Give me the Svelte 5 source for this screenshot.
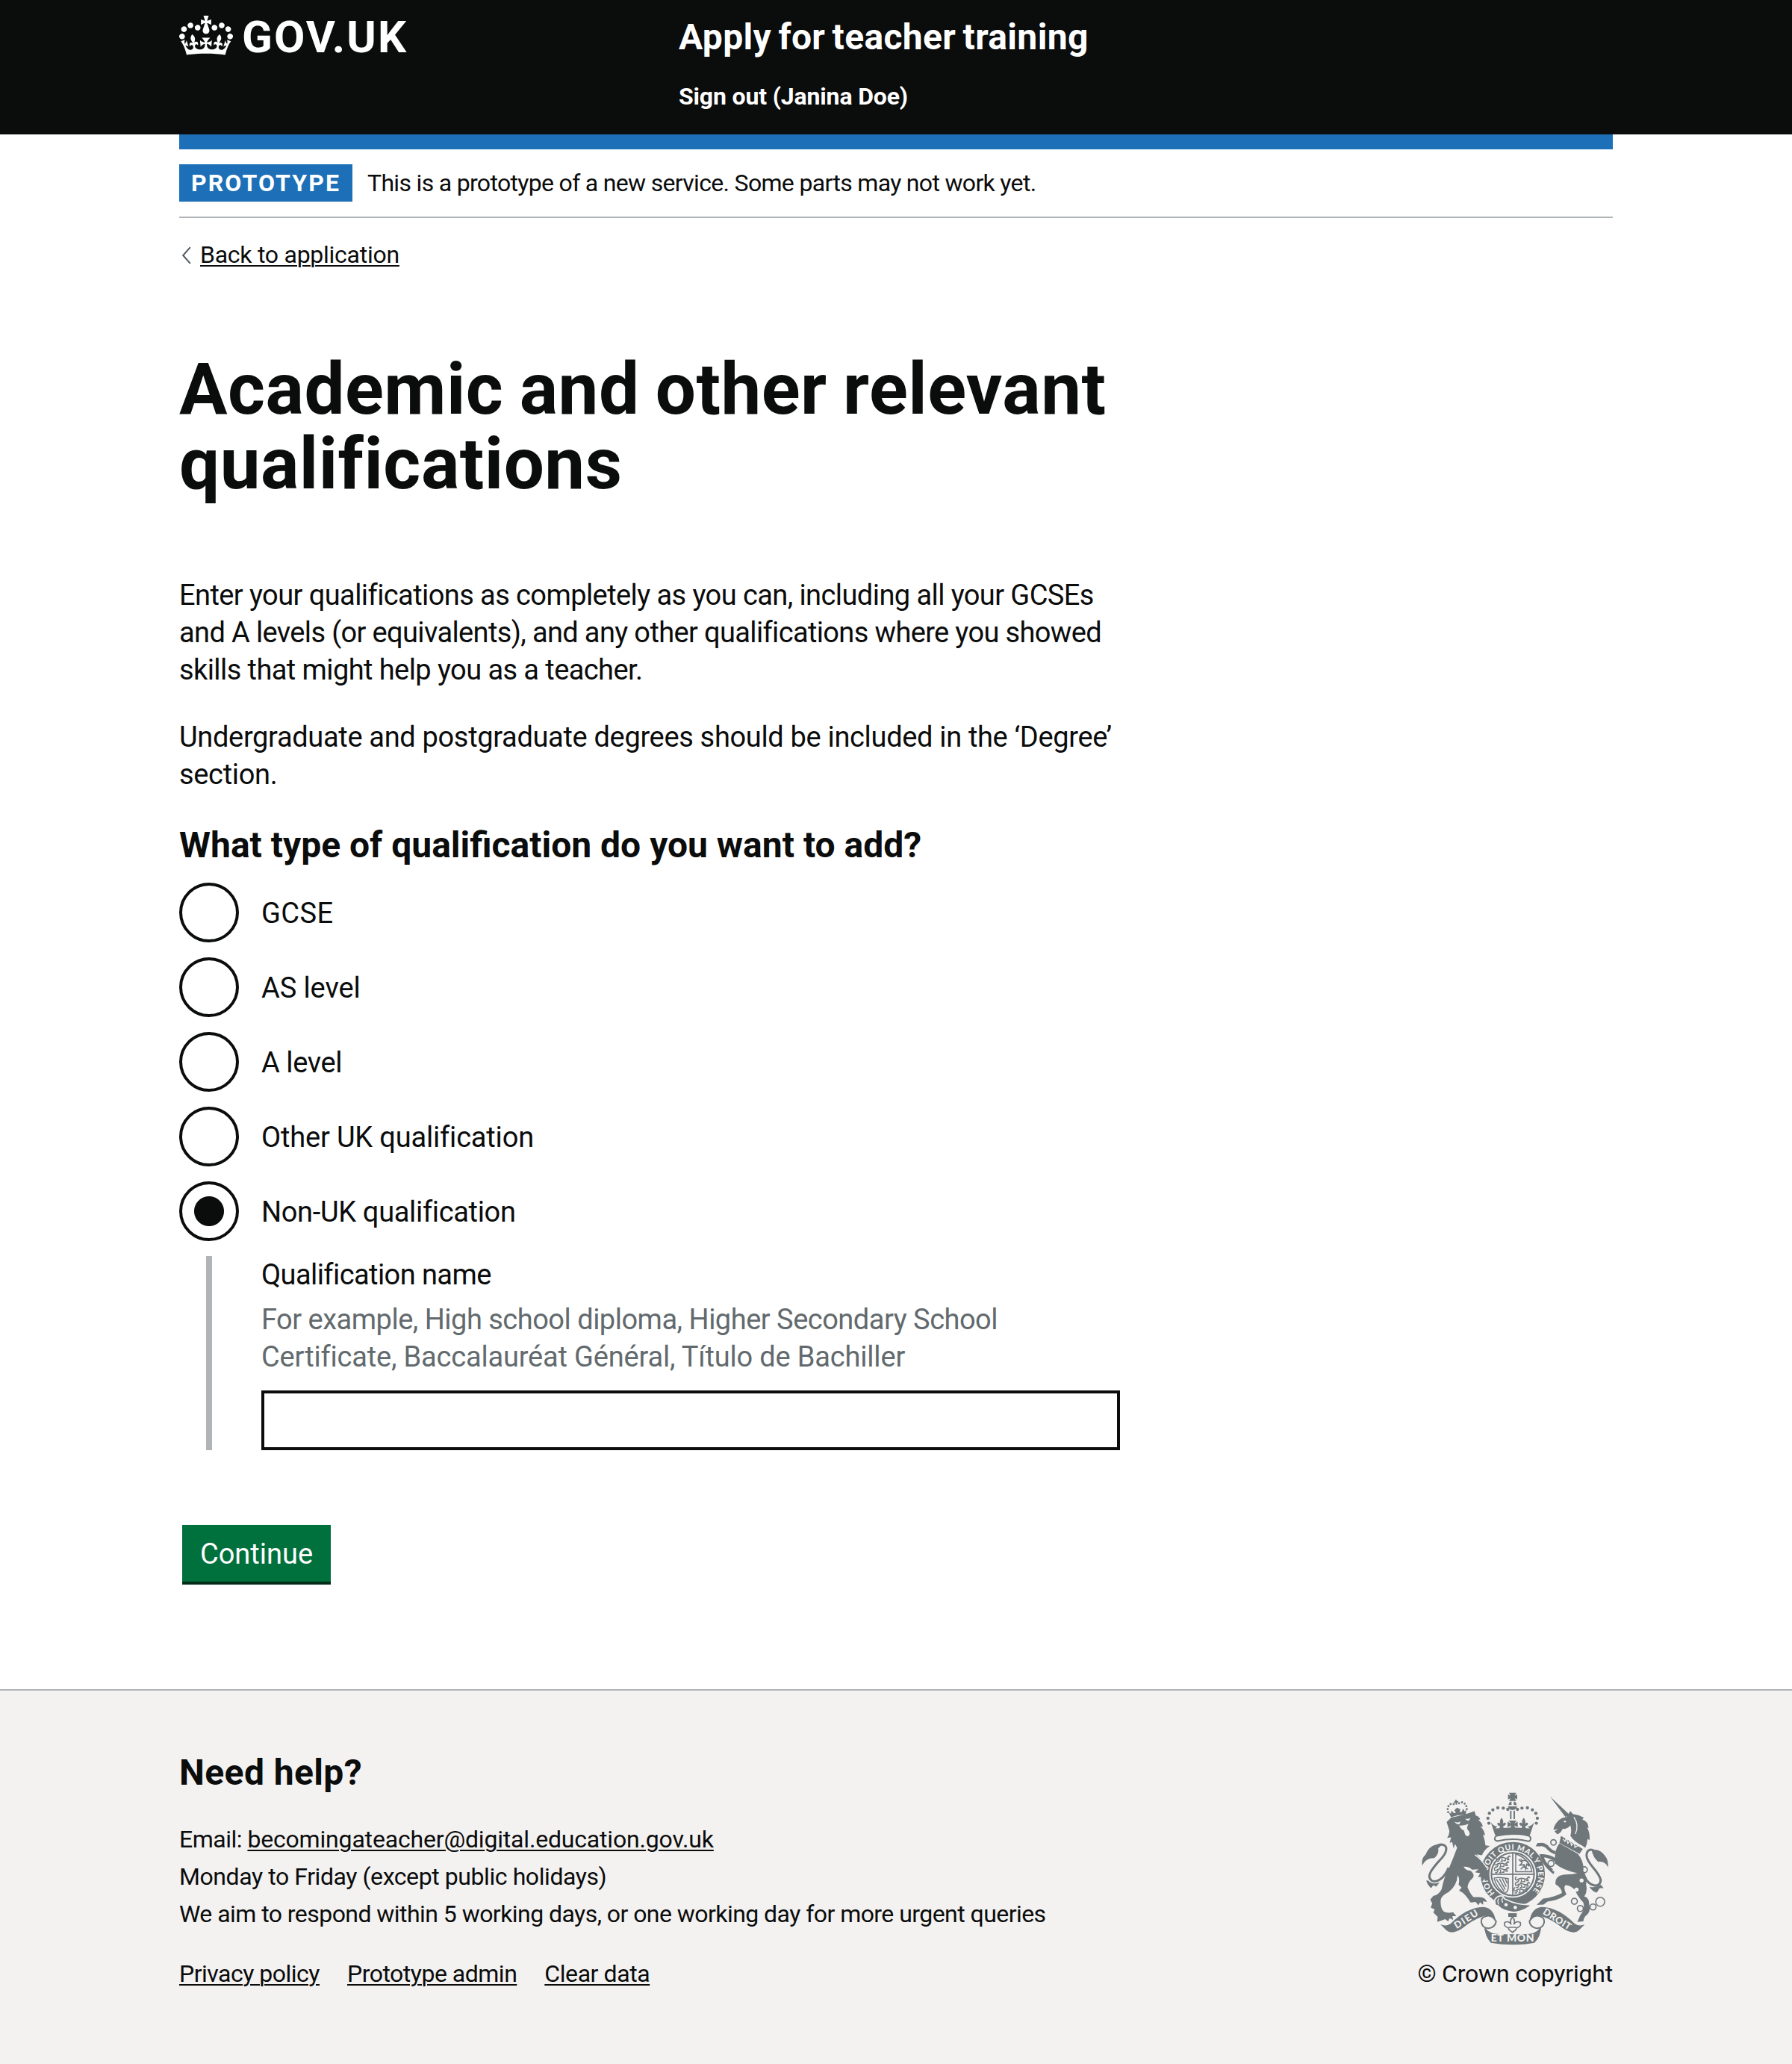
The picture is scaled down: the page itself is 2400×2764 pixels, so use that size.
<script>
  let selected = $state('non-uk');

  const options = [
    { value: 'gcse', label: 'GCSE', fit: 'wide' },
    { value: 'as', label: 'AS level', fit: 'plain' },
    { value: 'a', label: 'A level', fit: 'firm' },
    { value: 'other-uk', label: 'Other UK qualification', fit: 'close' },
    { value: 'non-uk', label: 'Non-UK qualification', fit: 'snug' }
  ];

  // Pearls along the left arch of the royal crown; the right arch mirrors them.
  const pearls = [[418, 127], [400, 122], [378, 121], [358, 129], [344, 143], [338, 163], [342, 183]];
  const smallPearls = [[-38, 10], [-38, -2], [-33, -13], [-23, -20], [-11, -18], [11, -18], [23, -20], [33, -13], [38, -2], [38, 10]];
  const rings = [[602, 260, 11], [592, 345, 12], [726, 370, 12], [686, 497, 12], [710, 526, 12], [761, 520, 12], [790, 499, 18]];
</script>

{#snippet passant(x, y)}
  <path transform="translate({x} {y})" d="M-28 4 Q-32 -8 -24 -10 M-26 5 Q-10 -8 4 -2 T22 -8 M-14 2 L-20 12 H-27 M-6 0 L-4 12 H-11 M10 -2 L8 10 H0 M18 -6 L22 6 H14 M20 -8 Q26 -12 28 -4" />
{/snippet}

{#snippet crownFleur(x)}
  <path transform="translate({x} 185)" d="M0 -24 Q10 -12 5 0 Q10 -8 17 -3 Q18 9 7 8 L8 20 H-8 L-7 8 Q-18 9 -17 -3 Q-10 -8 -5 0 Q-10 -12 0 -24Z" />
{/snippet}

<header class="header">
  <div class="container header-row">
    <a class="logo" href="#home" aria-label="GOV.UK">
      <svg class="crown" viewBox="0 0 132 97" fill="currentColor" aria-hidden="true">
        <path d="M25 30.2c3.5 1.5 7.7-.2 9.1-3.7 1.5-3.6-.2-7.8-3.9-9.2-3.6-1.4-7.6.3-9.1 3.9-1.4 3.5.3 7.5 3.9 9zM9 39.5c3.6 1.5 7.8-.2 9.2-3.7 1.5-3.6-.2-7.8-3.9-9.1-3.6-1.5-7.6.2-9.1 3.8-1.4 3.5.3 7.5 3.8 9zM4.4 57.2c3.5 1.5 7.7-.2 9.1-3.8 1.5-3.6-.2-7.7-3.9-9.1-3.5-1.5-7.6.3-9.1 3.8-1.4 3.5.3 7.6 3.9 9.1zm38.3-21.4c3.5 1.5 7.7-.2 9.1-3.8 1.5-3.6-.2-7.7-3.9-9.1-3.6-1.5-7.6.3-9.1 3.8-1.3 3.6.4 7.7 3.9 9.1zm64.4-5.6c-3.6 1.5-7.8-.2-9.1-3.7-1.5-3.6.2-7.8 3.8-9.2 3.6-1.4 7.7.3 9.2 3.9 1.3 3.5-.4 7.5-3.9 9zm15.9 9.3c-3.6 1.5-7.7-.2-9.1-3.7-1.5-3.6.2-7.8 3.7-9.1 3.6-1.5 7.7.2 9.2 3.8 1.5 3.5-.3 7.5-3.8 9zm4.7 17.7c-3.6 1.5-7.8-.2-9.2-3.8-1.5-3.6.2-7.7 3.9-9.1 3.6-1.5 7.7.3 9.2 3.8 1.3 3.5-.4 7.6-3.9 9.1zM89.3 35.8c-3.6 1.5-7.8-.2-9.2-3.8-1.4-3.6.2-7.7 3.9-9.1 3.6-1.5 7.7.3 9.2 3.8 1.4 3.6-.3 7.7-3.9 9.1zM69.7 17.7l8.9 4.7V9.3l-8.9 2.8c-.2-.3-.5-.6-.9-.9L72.4 0H59.6l3.5 11.2c-.3.3-.6.5-.9.9l-8.8-2.8v13.1l8.8-4.7c.3.3.6.7.9.9l-5 15.4v.1c-.2.8-.4 1.6-.4 2.4 0 4.1 3.1 7.5 7 8.1h.2c.3 0 .7.1 1 .1.4 0 .7 0 1-.1h.2c4-.6 7.1-4.1 7.1-8.1 0-.8-.1-1.7-.4-2.4V34l-5.1-15.4c.4-.2.7-.6 1-.9zM66 92.8c16.9 0 32.8 1.1 47.1 3.2 4-16.9 8.9-26.7 14-33.5l-9.6-3.4c1 4.9 1.1 7.2 0 10.2-1.5-1.4-3-4.3-4.2-8.7L108.6 76c2.8-2 5-3.2 7.5-3.3-4.4 9.4-10 11.9-13.6 11.2-4.3-.8-6.3-4.6-5.6-7.9 1-4.7 5.7-5.9 8-.5 4.3-8.7-3-11.4-7.6-8.8 7.1-7.2 7.9-13.5 2.1-21.1-8 6.1-8.1 12.3-4.5 20.8-4.7-5.4-12.1-2.5-9.5 6.2 3.4-5.2 7.9-2 7.2 3.1-.6 4.3-6.4 7.8-13.5 7.2-10.3-.9-10.9-8-11.2-13.8 2.5-.5 7.1 1.8 11 7.3L80.2 60c-4.1 4.4-8 5.3-12.3 5.4 1.4-4.4 8-11.6 8-11.6H55.5s6.4 7.2 7.9 11.6c-4.2-.1-8-1-12.3-5.4l1.4 16.4c3.9-5.5 8.5-7.7 10.9-7.3-.3 5.8-.9 12.8-11.1 13.8-7.2.6-12.9-2.9-13.5-7.2-.7-5 3.8-8.3 7.1-3.1 2.7-8.7-4.6-11.6-9.4-6.2 3.7-8.5 3.6-14.7-4.6-20.8-5.8 7.6-5 13.9 2.2 21.1-4.7-2.6-11.9.1-7.7 8.8 2.3-5.5 7.1-4.2 8.1.5.7 3.3-1.3 7.1-5.7 7.9-3.5.7-9-1.8-13.5-11.2 2.5.1 4.7 1.3 7.5 3.3l-4.7-15.4c-1.2 4.4-2.7 7.2-4.3 8.7-1.1-3-.9-5.3 0-10.2l-9.5 3.4c5 6.9 9.9 16.7 14 33.5 14.8-2.1 30.8-3.2 47.7-3.2z" />
      </svg>
      <span class="logotype">GOV.UK</span>
    </a>
    <div class="header-content">
      <a class="service" href="#service">Apply for teacher training</a>
      <a class="signout" href="#sign-out">Sign out (Janina Doe)</a>
    </div>
  </div>
</header>

<div class="container">
  <div class="phase">
    <strong class="tag">Prototype</strong>
    <span class="phase-text">This is a prototype of a new service. Some parts may not work yet.</span>
  </div>

  <a class="back" href="#back">
    <svg class="chevron" viewBox="0 0 13 24" aria-hidden="true"><path d="M11.8 1.2 2.2 12l9.6 10.8" /></svg>
    <span class="back-text">Back to application</span>
  </a>

  <main class="main">
    <h1>Academic and other relevant qualifications</h1>

    <p><span class="tighter">Enter your qualifications as completely as you can, including all your GCSEs</span><br /><span class="tightest">and A levels (or equivalents), and any other qualifications where you showed</span><br /><span class="tighter">skills that might help you as a teacher.</span></p>
    <p class="snug">Undergraduate and postgraduate degrees should be included in the ‘Degree’ section.</p>

    <form onsubmit={(e) => e.preventDefault()}>
      <fieldset>
        <legend>What type of qualification do you want to add?</legend>
        <div class="radios">
          {#each options as option}
            <label class="radio">
              <input type="radio" name="type" value={option.value} bind:group={selected} />
              <span class={['radio-label', option.fit]}>{option.label}</span>
            </label>
          {/each}
        </div>
        {#if selected === 'non-uk'}
          <div class="conditional">
            <label class="tighter" for="name">Qualification name</label>
            <div class="hint"><span class="tight">For example, High school diploma, Higher Secondary School</span><br /><span class="close">Certificate, Baccalauréat Général, Título de Bachiller</span></div>
            <input id="name" class="field" type="text" />
          </div>
        {/if}
      </fieldset>
      <button class="button">Continue</button>
    </form>
  </main>
</div>

<footer class="footer">
  <div class="container footer-row">
    <div>
      <h2>Need help?</h2>
      <ul class="contact">
        <li class="tight">Email: <a class="close" href="#email">becomingateacher@digital.education.gov.uk</a></li>
        <li class="firm">Monday to Friday (except public holidays)</li>
        <li class="response">We aim to respond within 5 working days, or one working day for more urgent queries</li>
      </ul>
      <nav class="links">
        <a class="tight" href="#privacy">Privacy policy</a>
        <a class="tight" href="#admin">Prototype admin</a>
        <a class="firm" href="#clear">Clear data</a>
      </nav>
    </div>

    <div class="copyright">
      <svg class="crest" viewBox="72 58 750 616" aria-hidden="true">
        <defs>
          <path id="motto" d="M366 464 A102 102 0 1 1 510 464" />
        </defs>

        <!-- royal crown -->
        <g class="ink">
          <path d="M423 60h29l-6 12 10-5v20l-10-5 6 11h-29l6-11-10 5V67l10 5zM421 110q2-13 12-15v15zm33 0q-2-13-12-15v15zM418 115h38q-4 13-19 15-15-2-19-15z" />
          {#each pearls as [x, y]}
            <circle cx={x} cy={y} r="6.5" />
            <circle cx={875 - x} cy={y} r="6.5" />
          {/each}
          <path d="M427 132h6v34h-6zm14 0h6v34h-6z" />
          <path d="M421 172h33l-10 12 14-7v22l-14-7 6 14h-24l6-14-15 7v-22l15 7z" />
          {@render crownFleur(393)}
          {@render crownFleur(482)}
          <path d="M350 180q12 16 26 16l-8 8 69-4 69 4-8-8q14 0 26-16l-16 48q-2 6-8 8-63-14-126 0-6-2-8-8z" />
        </g>

        <!-- garter and motto -->
        <circle class="line garter" cx="438" cy="388" r="112" />
        <path class="paper line thin" d="M372 234q66-16 132 0 10 8 4 18-6 6-14 2-56-14-114 0-10 2-14-5-2-10 6-15z" />
        <text class="motto"><textPath href="#motto" textLength="468">HONI SOIT QUI MAL Y PENSE</textPath></text>

        <!-- quartered shield -->
        <circle class="line thin" cx="438" cy="388" r="86" />
        <path class="line mid" d="M438 301V474M351 388H525" />
        <g class="line detail">
          {@render passant(400, 324)}
          {@render passant(394, 347)}
          {@render passant(394, 370)}
          {@render passant(478, 408)}
          {@render passant(478, 430)}
          {@render passant(472, 452)}
          <path d="M450 306V378H515Q508 328 450 306ZM462 328l14 14-10 10 18-2 6 18 4-20 10 8-8-18q-10-10-20-2l-6-10M470 368l12-12 18 12" />
          <path d="M363 404Q382 398 420 406V444Q416 466 402 464 372 440 363 404ZM372 408l32 50M384 406l24 44M396 406l16 32M408 407l8 18" />
        </g>
        <path class="strap" d="M366 490q12-18 32-14l8 12q50 26 110 22-34 30-76 31-42-4-62-26-14 0-12-25z" />
        <path class="line pale" d="M382 486q-8 8 0 24M400 482q-10 8-2 20" />
        <circle class="paper" cx="411" cy="511" r="7" />
        <circle class="paper" cx="448" cy="522" r="7" />

        <!-- lion -->
        <g transform="translate(214 122) rotate(-9)">
          {#each smallPearls as [x, y]}<circle class="ink" cx={x} cy={y} r="4.2" />{/each}
          <path class="ink" d="M-3-34h6v6h6v6H3v8h-6v-8h-6v-6h6zM-36 12l8 6 4-12 8 12 8 0-4-12 12-8 12 8-4 12 8 0 8-12 4 12 8-6-6 20q-28-6-60 0z" />
        </g>
        <path class="ink" d="M172 178L190 160Q240 152 284 134L289 152Q304 156 307 168L299 169Q317 182 317 198L308 196Q325 212 326 232L318 229Q326 248 328 272L346 274Q322 290 314 312L292 308Q322 338 336 376L346 408 336 402 330 416 322 404 311 414 314 398 298 400 307 384 286 380 300 368 274 370Q262 356 240 358 248 374 268 374 286 388 278 402 258 420 256 440 266 466 280 480L304 480Q328 480 334 500L319 497 319 511 306 501 300 513 289 500 268 502Q254 478 238 464L222 454 232 442 220 430Q226 402 216 392 214 432 180 460 150 475 148 492 146 524 160 538 174 546 198 541L211 557 195 557 198 572 184 565 178 578 166 569 150 575 134 580 136 560 118 542 124 530 108 522 114 506 106 490 118 476Q142 470 152 448 162 396 182 362 196 330 214 282L206 266 200 284 194 258 184 262 190 240 174 242Q188 222 180 204Z" />
        <path class="paper" d="M202 176q12 8 26 0l-4 10q-12 4-22-10zM246 163q8 6 22-2l-6 11q-10 4-16-9zM222 192q20 2 38-6-8 14-4 22 14 14 6 24-10 8-16-4-2-10-6-18-8 2-18-18z" />
        <path class="line pale" d="M286 310Q312 328 334 362" />
        <path class="line tail" d="M180 362C162 406 132 424 112 414C86 396 118 362 144 332C176 300 180 270 150 268C138 268 132 276 130 286" />
        <path class="ink" d="M156 266Q104 264 88 308 68 326 74 353 88 322 122 323 142 308 138 284ZM90 414Q100 412 104 420 124 430 144 420L130 438 118 432 110 444Q96 434 90 414Z" />

        <!-- unicorn -->
        <g class="ink">
          <path d="M588 75L666 148 650 158ZM654 158L670 134 680 146Q702 148 724 160L718 168Q742 176 743 202L737 200Q750 222 747 252L739 246Q738 266 730 282L716 272Q688 260 670 234 676 214 670 192 656 208 638 206 634 220 618 228L606 216 620 206 602 210Q602 192 624 170 636 160 654 158Z" />
          <path d="M632 234L720 286 707 306 626 262ZM626 264L700 306Q726 338 722 375 738 396 733 430 740 456 726 478 746 482 746 512 752 536 738 550 722 562 722 578L698 580 710 552Q730 530 722 502 700 480 688 450 666 430 650 432 640 442 654 470 622 494 578 498L562 510 534 512 560 486Q604 482 636 464 636 444 610 428 606 396 642 390 686 388 698 384 640 372 608 345 604 290 626 264Z" />
          <path d="M755 290Q792 284 812 318 822 330 822 360 808 334 782 338 762 322 755 290ZM746 438Q770 446 792 430L804 444 788 444 776 462Q758 458 746 438Z" />
          <path d="M530 276l8-14 22 0-10 14zM578 364l28 14-4 10-10-8z" />
        </g>
        <circle class="paper" cx="648" cy="176" r="4" />
        <path class="line pale" d="M684 158Q706 190 690 226M640 246l8 10 6-14 6 22 10-14 4 22 12-12 2 20 14-8" />
        <path class="line leg" d="M610 302Q590 296 576 278 560 264 545 270M612 332Q580 312 554 314 566 350 596 374" />
        <path class="line tail" d="M728 398C744 438 790 446 792 412C784 372 738 350 735 314C735 288 752 286 766 294" />
        {#each rings as [x, y, r]}<circle class="line chain" cx={x} cy={y} r={r} />{/each}
        <circle class="paper" cx="715" cy="413" r="8" />
        <circle class="paper" cx="695" cy="450" r="8" />

        <!-- ribbon -->
        <path class="ink" d="M420 545h34v15h-34z" />
        <path class="line chain" d="M437 560Q450 574 442 590 452 574 468 582 474 598 454 604L450 612 437 622 424 612 420 604Q400 598 406 582 422 574 432 590 424 574 437 560ZM422 602H452" />
        <path class="ink" d="M728 590Q704 600 686 586 622 522 556 520 514 522 505 578 530 548 552 556 600 572 640 606 682 634 704 614ZM147 590Q171 600 189 586 253 522 319 520 361 522 370 578 345 548 323 556 275 572 235 606 193 634 171 614ZM322 592Q336 626 372 628 437 632 504 628 540 626 553 592 552 640 525 664 437 680 350 664 326 640 322 592Z" />
        <path class="paper line thin" d="M334 556Q308 560 312 584 318 606 342 606 368 600 371 578 356 552 334 556ZM542 556Q568 560 564 584 558 606 534 606 508 600 505 578 520 552 542 556Z" />
        <g class="ribbon-text">
          <text transform="translate(257 580) rotate(-33)" textLength="106">DIEU</text>
          <text transform="translate(610 580) rotate(32)" textLength="126">DROIT</text>
          <text class="mon" x="437" y="660" textLength="174">ET MON</text>
        </g>
      </svg>
      <a class="copyright-text" href="#copyright">© Crown copyright</a>
    </div>
  </div>
</footer>

<style>
  :global(body) {
    margin: 0;
    background: #fff;
    color: #0b0c0c;
    font-family: Roboto, "Liberation Sans", sans-serif;
    font-size: 38px;
    line-height: 50px;
  }
  a { color: inherit; text-decoration-thickness: 2px; text-underline-offset: 3px; }
  .container { width: 1920px; margin: 0 auto; }

  .wide { letter-spacing: 0.4px; }
  .plain { letter-spacing: -0.1px; }
  .close { letter-spacing: -0.18px; }
  .snug { letter-spacing: -0.33px; }
  .firm { letter-spacing: -0.42px; }
  .tight { letter-spacing: -0.5px; }
  .response { letter-spacing: -0.55px; }
  .tighter { letter-spacing: -0.58px; }
  .tightest { letter-spacing: -0.64px; }

  .header { background: #0b0c0c; color: #fff; }
  .header a { text-decoration: none; }
  .header-row { display: flex; height: 180px; box-sizing: border-box; padding-top: 20px; }
  .logo { display: flex; align-items: flex-start; width: 669px; }
  .crown { width: 72px; height: 53px; margin-top: 1px; }
  .logotype { margin-left: 12px; font-size: 60px; font-weight: 700; line-height: 60px; letter-spacing: 2.1px; }
  .header-content { display: flex; flex-direction: column; gap: 24px; }
  .service { font-size: 48px; font-weight: 700; line-height: 60px; word-spacing: -3px; letter-spacing: 0.35px; }
  .signout { font-size: 32px; font-weight: 700; letter-spacing: -0.15px; }

  .phase { display: flex; gap: 20px; padding: 20px 0; border-top: 20px solid #1d70b8; border-bottom: 2px solid #b1b4b6; font-size: 32px; }
  .tag { box-sizing: border-box; width: 232px; padding-left: 16px; background: #1d70b8; color: #fff; text-transform: uppercase; letter-spacing: 2.1px; }
  .phase-text { letter-spacing: -0.68px; }

  .back { display: flex; width: max-content; margin-top: 24px; font-size: 32px; text-decoration: none; }
  .chevron { width: 13px; height: 24px; margin: 14px 12px 0 3px; fill: none; stroke: #505a5f; stroke-width: 2; }
  .back-text { letter-spacing: -0.26px; text-decoration: underline; text-decoration-thickness: 2px; }

  .main { width: 1260px; padding: 105px 0 144px; }
  h1 { margin: 0 0 101px; font-size: 96px; line-height: 100px; letter-spacing: 0.5px; word-spacing: -3px; }
  p { margin: 0 0 40px; }
  fieldset { margin: 0; padding: 0; border: 0; }
  legend { padding: 0; margin-bottom: 20px; font-size: 48px; font-weight: 700; line-height: 60px; }

  .radios { display: grid; gap: 20px; }
  .radio { display: flex; gap: 30px; height: 80px; }
  .radio input { appearance: none; flex: none; width: 80px; height: 80px; margin: 0; border: 4px solid #0b0c0c; border-radius: 50%; background: #fff; }
  .radio input:checked { background: radial-gradient(circle, #0b0c0c 19.5px, #fff 20.5px); }
  .radio-label { line-height: 82px; }

  .conditional { margin: 20px 0 0 36px; padding-left: 66px; border-left: 8px solid #b1b4b6; }
  .conditional label { display: block; }
  .hint { margin: 10px 0 20px; color: #626a6e; }
  .field { display: block; box-sizing: border-box; width: 100%; height: 80px; border: 4px solid #0b0c0c; border-radius: 0; background: #fff; }
  .button { display: block; width: 199px; height: 76px; margin: 100px 0 0 4px; padding: 2px 0 0; border: 0; background: #00703c; box-shadow: 0 4px 0 #002d18; color: #fff; font: 38px/50px Roboto, sans-serif; }

  .footer { background: #f3f2f1; border-top: 2px solid #b1b4b6; font-size: 32px; }
  .footer-row { display: flex; justify-content: space-between; align-items: flex-end; box-sizing: border-box; height: 500px; padding-bottom: 96px; }
  h2 { margin: 0 0 34px; font-size: 48px; line-height: 60px; letter-spacing: 0.4px; }
  .contact { margin: 0 0 30px; padding: 0; list-style: none; }
  .links { display: flex; gap: 37px; }

  .copyright { display: flex; flex-direction: column; align-items: flex-end; }
  .copyright-text { letter-spacing: -0.2px; text-decoration: none; }
  .crest { width: 250px; height: 205px; margin: 0 6px 13px 0; }

  .ink { fill: #6f777b; }
  .paper { fill: #f3f2f1; }
  .line { stroke: #6f777b; }
  .line:not(.paper) { fill: none; }
  .garter { stroke-width: 35; }
  .thin { stroke-width: 6; }
  .mid { stroke-width: 5; }
  .chain { stroke-width: 5; }
  .detail { stroke-width: 4.5; }
  .tail { stroke-width: 9; }
  .leg { stroke-width: 13; }
  .pale { stroke: #f3f2f1; stroke-width: 4; }
  .strap { fill: #6f777b; stroke: #f3f2f1; stroke-width: 5; }
  .motto { fill: #f3f2f1; font: 900 31px Lato, sans-serif; }
  .ribbon-text { fill: #f3f2f1; font: 900 38px Lato, sans-serif; text-anchor: middle; }
  .mon { font-size: 42px; }
</style>
